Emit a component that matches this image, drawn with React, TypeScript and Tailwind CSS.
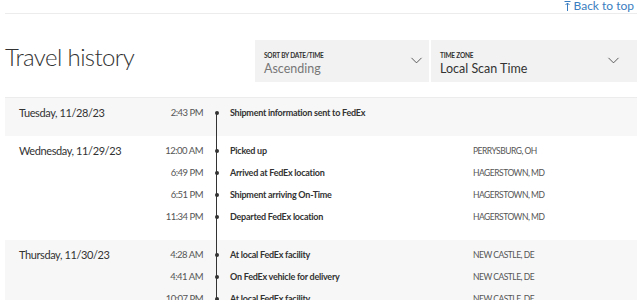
import { ChevronDown } from "lucide-react";

type ScanEvent = { time: string; status: string; location: string };
type Day = { date: string; shaded: boolean; events: ScanEvent[] };

const days: Day[] = [
  {
    date: "Tuesday, 11/28/23",
    shaded: true,
    events: [{ time: "2:43 PM", status: "Shipment information sent to FedEx", location: "" }],
  },
  {
    date: "Wednesday, 11/29/23",
    shaded: false,
    events: [
      { time: "12:00 AM", status: "Picked up", location: "PERRYSBURG, OH" },
      { time: "6:49 PM", status: "Arrived at FedEx location", location: "HAGERSTOWN, MD" },
      { time: "6:51 PM", status: "Shipment arriving On-Time", location: "HAGERSTOWN, MD" },
      { time: "11:34 PM", status: "Departed FedEx location", location: "HAGERSTOWN, MD" },
    ],
  },
  {
    date: "Thursday, 11/30/23",
    shaded: true,
    events: [
      { time: "4:28 AM", status: "At local FedEx facility", location: "NEW CASTLE, DE" },
      { time: "4:41 AM", status: "On FedEx vehicle for delivery", location: "NEW CASTLE, DE" },
      { time: "10:07 PM", status: "At local FedEx facility", location: "NEW CASTLE, DE" },
    ],
  },
];

function SortSelect({
  label,
  value,
  muted,
  className,
}: {
  label: string;
  value: string;
  muted?: boolean;
  className: string;
}) {
  return (
    <div className={`${className} h-[42px] bg-[#f2f2f2] flex items-center justify-between pl-[9px]`}>
      <div className="flex flex-col mt-[6px]">
        <span className="text-[6.5px] font-bold leading-[9px] text-[#333] tracking-[-0.2px] uppercase">{label}</span>
        <span className={`text-[12.5px] leading-[16px] mt-[1px] ${muted ? "text-[#777]" : "text-[#333]"}`}>{value}</span>
      </div>
      <ChevronDown size={19} strokeWidth={1.1} className="text-[#444] mt-[-2px]" />
    </div>
  );
}

export default function App() {
  return (
    <div className="w-[642px] h-[300px] overflow-hidden bg-white font-['Lato',sans-serif] text-[#333]">
      <div className="h-[13px] flex justify-end pr-[8px]">
        <a className="flex items-center gap-[3px] text-[12px] leading-[12px] -mt-[2px] text-[#3a7dc0]">
          <svg width="7" height="10" viewBox="0 0 7 10" fill="none" stroke="currentColor" strokeWidth="1">
            <path d="M0.5 0.5h6M3.5 2v8M1.5 4l2-2 2 2" />
          </svg>
          Back to top
        </a>
      </div>
      <div className="mx-[5px] border-t border-[#ececec]" />

      <div className="flex items-center mx-[5px] mt-[26px] h-[42px]">
        <h2 className="-mt-[8px] text-[24px] font-light leading-none tracking-[-0.6px] text-[#333]">Travel history</h2>
        <div className="flex gap-[2px] ml-auto">
          <SortSelect label="Sort by date/time" value="Ascending" muted className="w-[174px] pr-[3px]" />
          <SortSelect label="Time zone" value="Local Scan Time" className="w-[206px] pr-[14px]" />
        </div>
      </div>

      <div className="mx-[5px] mt-[15px] border-t border-[#ececec]" />

      <div className="relative mx-[5px]">
        <div className="absolute left-[210.5px] top-[15px] bottom-0 w-[1.5px] bg-[#333]" />
        {days.map((d) => (
          <div key={d.date} className={`flex pt-[4px] pb-[12px] ${d.shaded ? "bg-[#f7f7f7]" : "bg-white"}`}>
            <div className="w-[140px] pl-[14px] h-[22px] flex items-center whitespace-nowrap text-[11px] tracking-[-0.4px] text-[#333]">
              {d.date}
            </div>
            <div className="flex-1 flex flex-col">
              {d.events.map((e, i) => (
                <div key={i} className="h-[22px] flex items-center whitespace-nowrap">
                  <span className="w-[58px] text-right text-[9.5px] text-[#555] tracking-[-0.5px]">{e.time}</span>
                  <span className="w-[27px] flex justify-center">
                    <span className="w-[4px] h-[4px] rounded-full bg-[#333]" />
                  </span>
                  <span className="w-[243px] text-[9px] font-bold text-[#333] tracking-[-0.25px]">{e.status}</span>
                  <span className="text-[8.5px] text-[#555] tracking-[-0.5px]">{e.location}</span>
                </div>
              ))}
            </div>
          </div>
        ))}
      </div>
    </div>
  );
}
